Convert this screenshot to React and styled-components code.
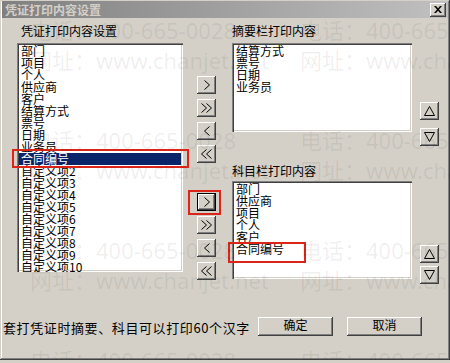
import React from 'react';
import styled, { createGlobalStyle } from 'styled-components';

const Global = createGlobalStyle`
  html, body { margin: 0; padding: 0; background: #d4d0c8; }
  body {
    font-family: "Noto Sans CJK SC", "DejaVu Sans", sans-serif;
    font-size: 12px;
    color: #000;
  }
  #root { width: 450px; height: 363px; overflow: hidden; }
`;

const Window = styled.div`
  position: relative;
  width: 450px;
  height: 360px;
  box-sizing: border-box;
  padding: 1px 2px 2px 2px;
  background: #d4d0c8;
  box-shadow: inset -1px -1px #404040, inset 1px 1px #d4d0c8,
    inset -2px -2px #808080, inset 2px 2px #ffffff;
  display: flex;
  flex-direction: column;
`;

const TitleBar = styled.div`
  height: 17px;
  display: flex;
  align-items: center;
  padding: 0 2px 0 3px;
  background: linear-gradient(90deg, #808080 0%, #c0c0c0 100%);
  color: #d4d0c8;
  font-weight: bold;
  font-size: 12px;
  line-height: 17px;
  white-space: nowrap;
`;

const bevel = `
  background: #d4d0c8;
  box-sizing: border-box;
  box-shadow: inset -1px -1px #404040, inset 1px 1px #ffffff,
    inset -2px -2px #808080, inset 2px 2px #d4d0c8;
`;

const CloseButton = styled.div`
  ${bevel}
  margin-left: auto;
  width: 16px;
  height: 14px;
  display: flex;
  align-items: center;
  justify-content: center;
`;

const Body = styled.div`
  flex: 1;
  display: flex;
  flex-direction: column;
`;

const MainRow = styled.div`
  display: flex;
  align-items: flex-start;
  padding-left: 15px;
`;

const Column = styled.div`
  display: flex;
  flex-direction: column;
  width: ${(p) => p.$w}px;
  margin-left: ${(p) => p.$ml || 0}px;
  padding-top: ${(p) => p.$pt || 0}px;
`;

const Label = styled.div`
  height: 16px;
  line-height: 16px;
  margin-top: ${(p) => p.$mt}px;
  padding-left: ${(p) => p.$indent || 0}px;
  white-space: nowrap;
`;

const ListBox = styled.div`
  box-sizing: border-box;
  height: ${(p) => p.$h}px;
  margin-top: ${(p) => p.$mt}px;
  padding: 2px;
  background: #ffffff;
  overflow: hidden;
  box-shadow: inset 1px 1px #808080, inset 2px 2px #404040,
    inset -1px -1px #ffffff, inset -2px -2px #d4d0c8;
`;

const Item = styled.div`
  height: 12px;
  line-height: 12px;
  padding-left: 2px;
  white-space: nowrap;
  font-size: 12px;
  background: ${(p) => (p.$selected ? '#0a246a' : 'transparent')};
  color: ${(p) => (p.$selected ? '#ffffff' : '#000000')};
`;

const ButtonGroup = styled.div`
  display: flex;
  flex-direction: column;
  gap: ${(p) => p.$gap}px;
  margin-top: ${(p) => p.$mt || 0}px;
`;

const SmallButton = styled.div`
  ${bevel}
  width: 19px;
  height: 18px;
  display: flex;
  align-items: center;
  justify-content: center;
  ${(p) =>
    p.$focused
      ? `box-shadow: inset 1px 1px #000, inset -1px -1px #000,
         inset -2px -2px #404040, inset 2px 2px #ffffff,
         inset -3px -3px #808080;`
      : ''}
`;

const BottomRow = styled.div`
  display: flex;
  align-items: center;
  height: 19px;
  margin-top: 33px;
  padding-left: 1px;
`;

const Note = styled.div`
  width: 255px;
  font-size: 13px;
  letter-spacing: 0.6px;
  white-space: nowrap;
  padding-top: 2px;
`;

const DlgButton = styled.div`
  ${bevel}
  width: 75px;
  height: 19px;
  margin-left: ${(p) => p.$ml || 0}px;
  display: flex;
  justify-content: center;
  font-size: 12px;
  line-height: 16px;
`;

const RedBox = styled.div`
  position: absolute;
  left: ${(p) => p.$x}px;
  top: ${(p) => p.$y}px;
  width: ${(p) => p.$w}px;
  height: ${(p) => p.$h}px;
  box-sizing: border-box;
  border: 2px solid #dc2418;
  pointer-events: none;
`;

const Watermark = styled.div`
  position: absolute;
  inset: 0;
  pointer-events: none;
  overflow: hidden;
`;

const WmText = styled.div`
  position: absolute;
  left: ${(p) => p.$x}px;
  top: ${(p) => p.$y}px;
  font-family: "Noto Sans", "Noto Sans CJK SC", sans-serif;
  font-size: 22px;
  line-height: 30px;
  white-space: nowrap;
  color: rgba(0, 0, 0, 0.07);
`;

const Chevron = ({ dir = 'right', double = false }) => {
  const one = (dx) =>
    dir === 'right'
      ? `M${dx + 0.5} 0.5 L${dx + 5.5} 5 L${dx + 0.5} 9.5`
      : `M${dx + 5.5} 0.5 L${dx + 0.5} 5 L${dx + 5.5} 9.5`;
  const w = double ? 11 : 6;
  return (
    <svg width={w} height="10" viewBox={`0 0 ${w} 10`}>
      <path d={one(0)} fill="none" stroke="#000" strokeWidth="1" />
      {double && <path d={one(5)} fill="none" stroke="#000" strokeWidth="1" />}
    </svg>
  );
};

const Tri = ({ up }) => (
  <svg width="11" height="10" viewBox="0 0 11 10">
    <path
      d={up ? 'M5.5 0.5 L10.5 9.5 L0.5 9.5 Z' : 'M0.5 0.5 L10.5 0.5 L5.5 9.5 Z'}
      fill="none"
      stroke="#000"
      strokeWidth="1"
    />
  </svg>
);

const XIcon = () => (
  <svg width="8" height="7" viewBox="0 0 8 7">
    <path d="M0 0 L2 0 L4 2.3 L6 0 L8 0 L5 3.5 L8 7 L6 7 L4 4.7 L2 7 L0 7 L3 3.5 Z" fill="#000" />
  </svg>
);

const leftItems = [
  '部门', '项目', '个人', '供应商', '客户', '结算方式', '票号', '日期', '业务员',
  '合同编号', '自定义项2', '自定义项3', '自定义项4', '自定义项5', '自定义项6',
  '自定义项7', '自定义项8', '自定义项9', '自定义项10',
];
const summaryItems = ['结算方式', '票号', '日期', '业务员'];
const subjectItems = ['部门', '供应商', '项目', '个人', '客户', '合同编号'];

const wmRows = [
  { y: 15, t: '电话：400-665-0028' },
  { y: 45, t: '网址：www.chanjet.net' },
  { y: 125, t: '电话：400-665-0028' },
  { y: 155, t: '网址：www.chanjet.net' },
  { y: 235, t: '电话：400-665-0028' },
  { y: 265, t: '网址：www.chanjet.net' },
  { y: 345, t: '电话：400-665-0028' },
];

const MoveButtons = ({ focusFirst, mt }) => (
  <ButtonGroup $gap={5} $mt={mt}>
    <SmallButton $focused={focusFirst}><Chevron dir="right" /></SmallButton>
    <SmallButton><Chevron dir="right" double /></SmallButton>
    <SmallButton><Chevron dir="left" /></SmallButton>
    <SmallButton><Chevron dir="left" double /></SmallButton>
  </ButtonGroup>
);

export default function App() {
  return (
    <>
      <Global />
      <Window>
        <TitleBar>
          凭证打印内容设置
          <CloseButton><XIcon /></CloseButton>
        </TitleBar>
        <Body>
          <MainRow>
            <Column $w={166}>
              <Label $mt={5} $indent={4}>凭证打印内容设置</Label>
              <ListBox $h={229} $mt={4}>
                {leftItems.map((t) => (
                  <Item key={t} $selected={t === '合同编号'}>{t}</Item>
                ))}
              </ListBox>
            </Column>
            <Column $w={19} $ml={14} $pt={58}>
              <MoveButtons />
              <MoveButtons focusFirst mt={30} />
            </Column>
            <Column $w={180} $ml={16}>
              <Label $mt={5}>摘要栏打印内容</Label>
              <ListBox $h={89} $mt={4}>
                {summaryItems.map((t) => <Item key={t}>{t}</Item>)}
              </ListBox>
              <Label $mt={31}>科目栏打印内容</Label>
              <ListBox $h={98} $mt={2}>
                {subjectItems.map((t) => <Item key={t}>{t}</Item>)}
              </ListBox>
            </Column>
            <Column $w={19} $ml={8} $pt={84}>
              <ButtonGroup $gap={8}>
                <SmallButton><Tri up /></SmallButton>
                <SmallButton><Tri /></SmallButton>
              </ButtonGroup>
              <ButtonGroup $gap={3} $mt={99}>
                <SmallButton><Tri up /></SmallButton>
                <SmallButton><Tri /></SmallButton>
              </ButtonGroup>
            </Column>
          </MainRow>
          <BottomRow>
            <Note>套打凭证时摘要、科目可以打印60个汉字</Note>
            <DlgButton>确定</DlgButton>
            <DlgButton $ml={14}>取消</DlgButton>
          </BottomRow>
        </Body>
        <RedBox $x={12} $y={149} $w={177} $h={19} />
        <RedBox $x={188} $y={190} $w={33} $h={25} />
        <RedBox $x={228} $y={242} $w={78} $h={21} />
        <Watermark>
          {wmRows.map((r, i) => (
            <React.Fragment key={i}>
              <WmText $x={30} $y={r.y}>{r.t}</WmText>
              <WmText $x={300} $y={r.y}>{r.t}</WmText>
            </React.Fragment>
          ))}
        </Watermark>
      </Window>
    </>
  );
}
